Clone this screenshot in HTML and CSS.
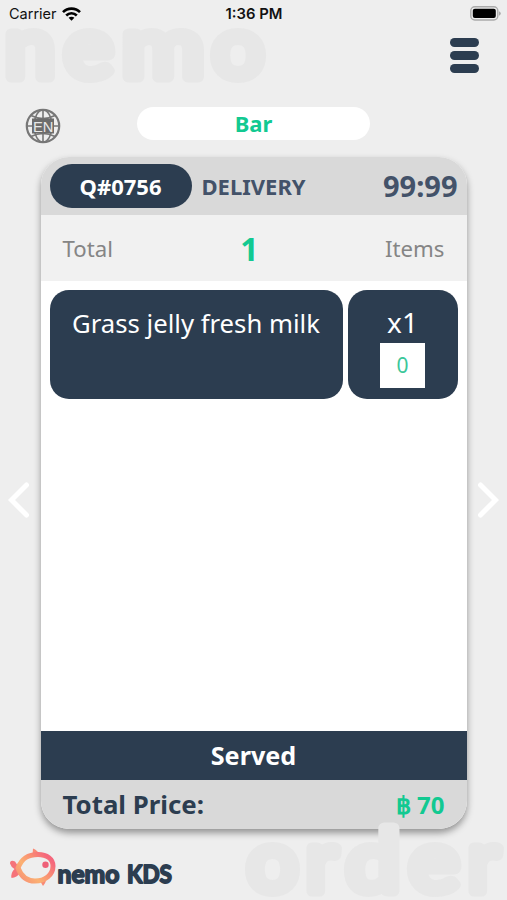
FILE: index.html
```html
<!DOCTYPE html>
<html lang="en">
<head>
    <meta charset="UTF-8">
    <meta name="viewport" content="width=device-width, initial-scale=1.0">
    <title>nemo KDS</title>
    <link rel="stylesheet" href="styles.css">
</head>
<body>
    <!-- Background words -->
    <svg class="watermark watermark-top" width="280" height="70" viewBox="0 0 280 70">
        <text y="51"><tspan x="5" textLength="50" lengthAdjust="spacingAndGlyphs">n</tspan><tspan x="64" textLength="49" lengthAdjust="spacingAndGlyphs">e</tspan><tspan x="122" textLength="82" lengthAdjust="spacingAndGlyphs">m</tspan><tspan x="212" textLength="52" lengthAdjust="spacingAndGlyphs">o</tspan></text>
    </svg>
    <svg class="watermark watermark-bottom" width="267" height="84" viewBox="0 0 267 84">
        <text y="72"><tspan x="7" textLength="51" lengthAdjust="spacingAndGlyphs">o</tspan><tspan x="66" textLength="31" lengthAdjust="spacingAndGlyphs">r</tspan><tspan x="106" textLength="54" lengthAdjust="spacingAndGlyphs">d</tspan><tspan x="169" textLength="50" lengthAdjust="spacingAndGlyphs">e</tspan><tspan x="228" textLength="31" lengthAdjust="spacingAndGlyphs">r</tspan></text>
    </svg>

    <div class="status-bar">
        <div class="carrier">
            <span>Carrier</span>
            <svg width="19" height="14" viewBox="0 0 19 14">
                <g fill="none" stroke="#000" stroke-width="2.6">
                    <path d="M1 5.2C5.6 0.4 13.4 0.4 18 5.2"/>
                    <path d="M4.200 8.500C7.200 5.400 11.800 5.400 14.800 8.500"/>
                </g>
                <path d="M9.500 13.800L6.600 10.800C8.200 9.300 10.800 9.300 12.400 10.800Z"/>
            </svg>
        </div>
        <div class="time">1:36 PM</div>
        <svg class="battery" width="31" height="15" viewBox="0 0 31 15">
            <rect x="0.8" y="0.8" width="27" height="13.2" rx="4" fill="#eee" stroke="#aaa" stroke-width="1.4"/>
            <rect x="2.8" y="2.8" width="23" height="9.2" rx="2"/>
            <path d="M29 5.2Q30.8 6 30.8 7.5T29 9.8Z" fill="#aaa"/>
        </svg>
    </div>

    <div class="menu-row">
        <button class="menu-button"><span></span><span></span><span></span></button>
    </div>

    <div class="station-row">
        <svg class="globe" width="36" height="36" viewBox="0 0 36 36">
            <g fill="none" stroke="#777" stroke-width="1.6">
                <circle cx="18" cy="18" r="16.2" stroke-width="2.2"/>
                <ellipse cx="18" cy="18" rx="9" ry="16"/>
                <path d="M18 2V34M2 18H34M6 7.5Q18 13.5 30 7.5M6 28.5Q18 22.5 30 28.5"/>
            </g>
            <rect x="7" y="10.5" width="22" height="15" fill="#6c6c6c"/>
            <text x="8" y="23.6" textLength="20.5" lengthAdjust="spacingAndGlyphs">EN</text>
        </svg>
        <div class="station">Bar</div>
    </div>

    <div class="board">
        <svg class="arrow" width="22" height="36" viewBox="0 0 22 36">
            <path d="M18.5 3L3.5 18L18.5 33"/>
        </svg>
        <div class="ticket">
            <div class="ticket-header">
                <div class="queue">Q#0756</div>
                <div class="type">DELIVERY</div>
                <div class="timer">99:99</div>
            </div>
            <div class="ticket-total">
                <span>Total</span>
                <b>1</b>
                <span>Items</span>
            </div>
            <div class="ticket-items">
                <div class="item-name">Grass jelly fresh milk</div>
                <div class="item-count">
                    <span>x1</span>
                    <div class="done">0</div>
                </div>
            </div>
            <button class="served">Served</button>
            <div class="ticket-footer">
                <span>Total Price:</span>
                <span class="price">฿ 70</span>
            </div>
        </div>
        <svg class="arrow" width="22" height="36" viewBox="0 0 22 36">
            <path d="M3.5 3L18.5 18L3.5 33"/>
        </svg>
    </div>

    <div class="logo">
        <svg width="180" height="46" viewBox="0 0 180 46">
            <defs>
                <linearGradient id="fish" x1="0" y1="1" x2="1" y2="0.3">
                    <stop offset="0" stop-color="#f78b76"/>
                    <stop offset="0.4" stop-color="#fbb172"/>
                    <stop offset="0.7" stop-color="#f98e74"/>
                    <stop offset="1" stop-color="#f5677c"/>
                </linearGradient>
            </defs>
            <path d="M32.500 9L33 2.500Q37.500 4 40 9ZM39.500 34L43 40Q46.500 36 46.500 31Z" fill="#f98a76"/>
            <path d="M18 20L15 15.500Q10 13.500 10 17.500Q11 21 14.500 23Q10.500 27 11.500 32Q17 31.500 20 27Z" fill="#f5737a"/>
            <path d="M18 22C22 12 28 8.500 38 8.500C47 8.500 53 13 53 20C53 29 45 35 35 35C26 35 21 30 18 22Z" fill="none" stroke="url(#fish)" stroke-width="5"/>
            <circle cx="45.500" cy="18.800" r="3.200" fill="#ee6078"/>
            <text x="57.500" y="37" textLength="62" lengthAdjust="spacingAndGlyphs">nemo</text>
            <text x="127" y="37" textLength="45" lengthAdjust="spacingAndGlyphs">KDS</text>
        </svg>
    </div>
</body>
</html>
```
FILE: styles.css
```css
* {
    box-sizing: border-box;
}

body {
    margin: 0;
    height: 900px;
    overflow: hidden;
    position: relative;
    display: flex;
    flex-direction: column;
    background: #eee;
    color: #2c3d50;
    font-family: "Noto Sans", sans-serif;
}

button {
    border: none;
    padding: 0;
    font-family: inherit;
}

/* Background words */
.watermark {
    position: absolute;
}

.watermark text {
    font-family: Lato, sans-serif;
    font-weight: 400;
    font-size: 85px;
    fill: #e7e7e7;
    stroke: #e7e7e7;
    stroke-width: 11px;
    stroke-linejoin: round;
}

.watermark-top {
    left: 0;
    top: 26px;
}

.watermark-bottom {
    right: 0;
    bottom: -3px;
    z-index: 2;
}

/* Status bar */
.status-bar {
    height: 27px;
    padding: 0 6px 0 9px;
    display: grid;
    grid-template-columns: 1fr auto 1fr;
    align-items: center;
    color: #111;
    font-family: Inter, sans-serif;
    font-size: 14.5px;
    line-height: 16px;
    position: relative;
}

.carrier {
    display: flex;
    align-items: center;
    gap: 5px;
}

.time {
    margin-right: 2px;
    font-size: 14.8px;
    font-weight: 600;
}

.battery {
    justify-self: end;
}

/* Menu and station */
.menu-row {
    height: 73px;
    padding: 11px 28px 0 0;
    display: flex;
    justify-content: flex-end;
    align-items: flex-start;
}

.menu-button {
    width: 29px;
    display: flex;
    flex-direction: column;
    gap: 4px;
    background: none;
}

.menu-button span {
    height: 9px;
    border-radius: 5px;
    background: #2c3d50;
}

.station-row {
    height: 57px;
    padding: 7px 0 0 25px;
    display: flex;
    align-items: flex-start;
}

.globe {
    margin-top: 1px;
}

.globe text {
    font-family: "Liberation Sans", sans-serif;
    font-size: 15.5px;
    fill: #e8e8e8;
}

.station {
    width: 233px;
    height: 33px;
    margin-left: 76px;
    border-radius: 17px;
    background: #fff;
    color: #12c991;
    font-size: 22px;
    font-weight: 700;
    line-height: 33px;
    text-align: center;
}

/* Ticket */
.board {
    height: 672px;
    padding: 0 8px;
    display: flex;
    justify-content: space-between;
    align-items: center;
}

.arrow {
    margin-top: 13px;
    fill: none;
    stroke: #fff;
    stroke-width: 5px;
    stroke-linecap: round;
}

.ticket {
    width: 426px;
    height: 672px;
    display: flex;
    flex-direction: column;
    border-radius: 28px;
    overflow: hidden;
    background: #fff;
    box-shadow: 0 4px 7px rgba(0, 0, 0, 0.38);
}

.ticket-header {
    height: 58px;
    padding: 7px 9px 0;
    display: flex;
    align-items: flex-start;
    background: #d9d9d9;
    color: #435269;
    font-weight: 700;
    line-height: 44px;
}

.queue {
    width: 142px;
    height: 44px;
    border-radius: 22px;
    background: #2c3d50;
    color: #fff;
    font-size: 22px;
    text-align: center;
}

.type {
    margin-left: 10px;
    font-size: 22px;
}

.timer {
    margin-left: auto;
    font-size: 29px;
}

.ticket-total {
    height: 66px;
    padding: 0 22px;
    display: grid;
    grid-template-columns: 1fr auto 1fr;
    align-items: center;
    background: #f1f1f1;
    color: #858585;
    font-size: 22.2px;
}

.ticket-total b {
    margin-right: 8px;
    color: #12c991;
    font-size: 32px;
}

.ticket-total span:last-child {
    text-align: right;
}

.ticket-items {
    flex: 1;
    padding: 9px 9px 0;
    display: flex;
    align-items: flex-start;
    gap: 5px;
    color: #fff;
    font-size: 25.7px;
}

.item-name,
.item-count {
    height: 109px;
    border-radius: 19px;
    background: #2c3d50;
    text-align: center;
}

.item-name {
    width: 293px;
    padding-top: 16px;
}

.item-count {
    flex: 1;
    padding-top: 14px;
    display: flex;
    flex-direction: column;
    align-items: center;
    gap: 3px;
    font-size: 28px;
    line-height: 36px;
}

.done {
    width: 45px;
    height: 45px;
    background: #fff;
    color: #3cc79a;
    font-size: 21px;
    line-height: 45px;
}

.served {
    height: 49px;
    padding-bottom: 2px;
    background: #2c3d50;
    color: #fff;
    font-size: 25.2px;
    font-weight: 700;
}

.ticket-footer {
    height: 49px;
    padding: 0 22px 1px;
    display: flex;
    justify-content: space-between;
    align-items: center;
    background: #d9d9d9;
    font-size: 25.8px;
    font-weight: 700;
}

.price {
    color: #12c991;
    font-size: 24px;
}

/* Logo */
.logo {
    padding-top: 17px;
    position: relative;
}

.logo svg {
    display: block;
}

.logo text {
    font-family: Lato, sans-serif;
    font-weight: 700;
    font-size: 25px;
    fill: #2c3d50;
    stroke: #2c3d50;
    stroke-width: 1.8px;
    stroke-linejoin: round;
}
```
